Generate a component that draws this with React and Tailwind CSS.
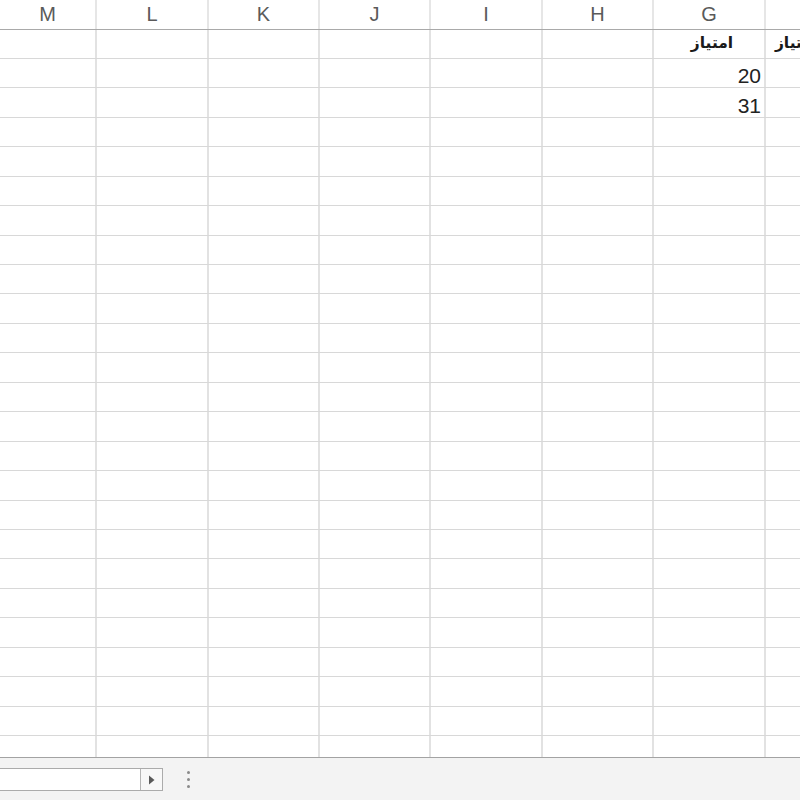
import React from 'react';

const columns = [
    { id: 'M', w: 'w-[97px]' },
    { id: 'L', w: 'w-[112px]' },
    { id: 'K', w: 'w-[111px]' },
    { id: 'J', w: 'w-[111px]' },
    { id: 'I', w: 'w-[112px]' },
    { id: 'H', w: 'w-[111px]' },
    { id: 'G', w: 'w-[112px]' },
    { id: 'F', w: 'w-[112px]' },
];

const data = [
    { G: { text: 'امتیاز', head: true }, F: { text: 'حداکثر امتیاز', head: true } },
    { G: { text: '20' } },
    { G: { text: '31' } },
];

const ROWS = 25;

const Cell = ({ col, value }) => {
    return (
        <div className={`${col.w} shrink-0 h-full border-r-2 border-[#e2e2e2] flex items-end pb-[1px] overflow-hidden`}>
            {value && value.head && (
                <span dir="rtl" className="w-full mb-[5px] text-center text-[15.5px] leading-none font-bold text-[#1a1a1a] font-['DejaVu_Sans',sans-serif] whitespace-nowrap pl-[6px]">
                    {value.text}
                </span>
            )}
            {value && !value.head && (
                <span className="w-full text-right pr-[3px] text-[21px] text-[#222] leading-none">
                    {value.text}
                </span>
            )}
        </div>
    );
};

const App = () => {
    return (
        <div className="w-[800px] h-[800px] overflow-hidden bg-white flex flex-col font-['Liberation_Sans',Arial,sans-serif]">
            {/* Column headers */}
            <div className="h-[29.5px] shrink-0 flex border-b-[1.5px] border-[#a9a9a9] bg-white">
                {columns.map((col) => (
                    <div key={col.id} className={`${col.w} shrink-0 h-full border-r-2 border-[#e6e6e6] flex items-center justify-center text-[20px] text-[#5a5a5a]`}>
                        {col.id !== 'F' && col.id}
                    </div>
                ))}
            </div>

            {/* Grid body */}
            <div className="flex-1 overflow-hidden">
                {[...Array(ROWS)].map((_, r) => (
                    <div key={r} className="h-[29.45px] flex border-b-[1.5px] border-[#d8d8d8]">
                        {columns.map((col) => (
                            <Cell key={col.id} col={col} value={data[r] ? data[r][col.id] : null} />
                        ))}
                    </div>
                ))}
            </div>

            {/* Bottom bar */}
            <div className="h-[43px] shrink-0 bg-[#f3f3f3] border-t-[1.5px] border-[#a3a3a3] flex items-start pt-[10px]">
                <div className="w-[163px] h-[23px] bg-white border border-[#ababab] border-l-0 flex">
                    <div className="flex-1" />
                    <div className="w-[22px] h-full border-l border-[#b5b5b5] bg-[#f8f8f8] flex items-center justify-center">
                        <svg width="7" height="10" viewBox="0 0 7 10">
                            <path d="M1 0.5 L6.5 5 L1 9.5 Z" fill="#5a5a5a" />
                        </svg>
                    </div>
                </div>
                <div className="ml-[24px] h-[23px] flex flex-col items-center justify-center gap-[4px]">
                    <div className="w-[3px] h-[3px] rounded-full bg-[#8a8a8a]" />
                    <div className="w-[3px] h-[3px] rounded-full bg-[#8a8a8a]" />
                    <div className="w-[3px] h-[3px] rounded-full bg-[#8a8a8a]" />
                </div>
            </div>
        </div>
    );
};

export default App;
